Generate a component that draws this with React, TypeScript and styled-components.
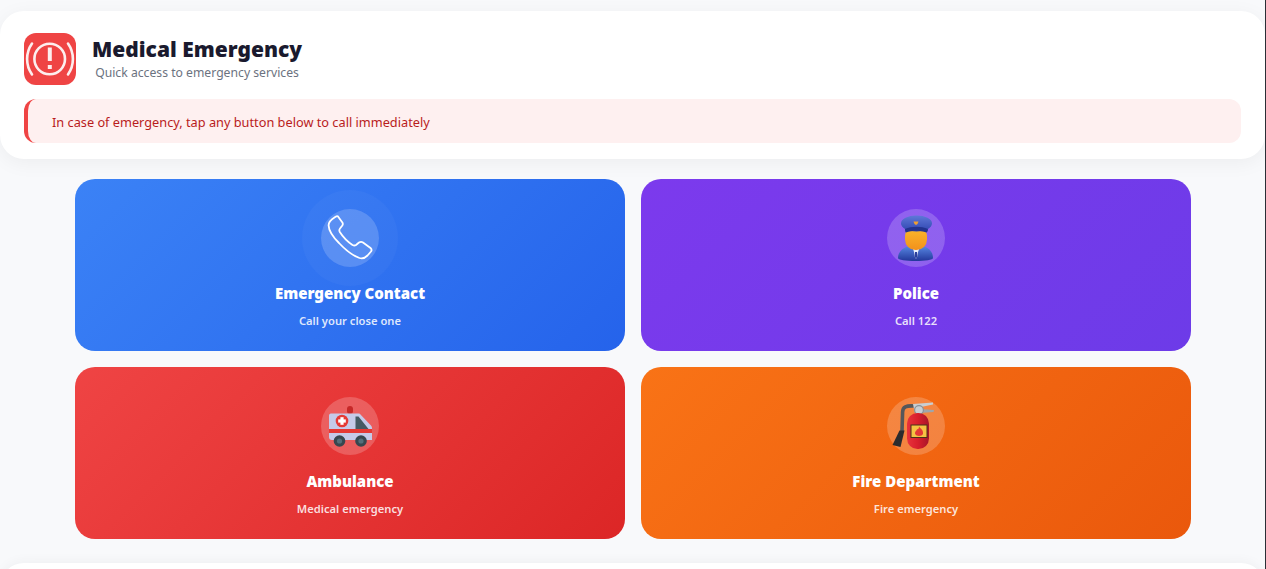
import React from "react";
import styled, { createGlobalStyle } from "styled-components";

const Global = createGlobalStyle`
  html, body { margin: 0; padding: 0; background: #f8f9fb; overflow: hidden; }
  body { font-family: "Noto Sans", "Open Sans", sans-serif; }
`;

const Page = styled.div`
  height: 569px;
  overflow: hidden;
  background: #f8f9fb;
  padding-top: 11px;
  box-sizing: border-box;
  border-right: 1px solid #2b2f36;
`;

const Header = styled.header`
  box-sizing: border-box;
  height: 148px;
  padding: 22px 24px 16px;
  background: #fff;
  border-radius: 24px;
  box-shadow: 0 4px 20px rgba(0, 0, 0, 0.05);
`;

const TitleRow = styled.div`
  display: flex;
  align-items: flex-start;
  gap: 16px;
  height: 52px;
  margin-bottom: 14px;
`;

const Logo = styled.div`
  width: 52px;
  height: 52px;
  border-radius: 12px;
  background: #ef4444;
  display: flex;
  align-items: center;
  justify-content: center;
  flex: none;
`;

const TitleBlock = styled.div`
  text-align: center;
  padding-top: 1px;
`;

const Title = styled.h1`
  margin: 0;
  font-size: 21px;
  line-height: 30px;
  font-weight: 900;
  color: #1a1a2e;
`;

const Subtitle = styled.p`
  margin: 1px 0 0;
  font-size: 12.2px;
  line-height: 16px;
  color: #6b7280;
`;

const Alert = styled.div`
  height: 44px;
  width: 1217px;
  box-sizing: border-box;
  padding: 2px 24px 0;
  display: flex;
  align-items: center;
  border-left: 4px solid #ef4444;
  border-radius: 12px;
  background: #fef0f0;
  color: #b91c1c;
  font-size: 12.75px;
`;

const Grid = styled.main`
  display: grid;
  grid-template-columns: 550px 550px;
  grid-auto-rows: 172px;
  gap: 16px;
  padding: 20px 0 0 75px;
`;

const Card = styled.button<{ $from: string; $to: string }>`
  border: 0;
  padding: 30px 0 0;
  margin: 0;
  font-family: inherit;
  border-radius: 20px;
  color: #fff;
  background: linear-gradient(135deg, ${(p) => p.$from}, ${(p) => p.$to});
  display: flex;
  flex-direction: column;
  align-items: center;
`;

const Circle = styled.div<{ $halo?: boolean }>`
  width: 58px;
  height: 58px;
  border-radius: 50%;
  background: rgba(255, 255, 255, 0.2);
  display: flex;
  align-items: center;
  justify-content: center;
  flex: none;
  box-shadow: ${(p) => (p.$halo ? "0 0 0 19px rgba(255,255,255,0.03)" : "none")};
`;

const CardTitle = styled.div`
  margin-top: 15px;
  font-size: 15px;
  line-height: 22px;
  font-weight: 900;
  color: #fff;
`;

const CardSub = styled.div`
  margin-top: 9px;
  font-size: 11.2px;
  line-height: 16px;
  font-weight: 600;
  color: rgba(255, 255, 255, 0.85);
`;

const Footer = styled.section`
  margin-top: 24px;
  height: 100px;
  background: #fff;
  border-radius: 24px 24px 0 0;
  box-shadow: 0 -2px 12px rgba(0, 0, 0, 0.04);
`;

const AlertIcon = () => (
  <svg width="52" height="52" viewBox="0 0 52 52" fill="none" stroke="#fdeeee">
    <circle cx="25.7" cy="26" r="15.3" strokeWidth="2.6" />
    <path d="M8 10.5 A27 27 0 0 0 8 41.5" strokeWidth="2.6" strokeLinecap="round" />
    <path d="M44 10.5 A27 27 0 0 1 44 41.5" strokeWidth="2.6" strokeLinecap="round" />
    <rect x="23.8" y="14.5" width="4" height="13.5" fill="#fdeeee" stroke="none" />
    <rect x="23.8" y="32" width="4" height="4" fill="#fdeeee" stroke="none" />
  </svg>
);

const PhoneIcon = () => (
  <svg width="58" height="58" viewBox="0 0 58 58" fill="none">
    <path
      d="M14.5 9.5 C12 11 8.5 14 8.6 17.5 C8.8 22 13 29 19 35 C26 42.5 34 48 39.5 50 C42.5 51 45.5 49.5 47.5 47.5 L51 43.5 C52 42 51.7 41 50.5 40 L43 34.5 C41.5 33.4 40.5 33.5 39 34.5 L36 37 C34.8 37.8 33.5 37.5 32.5 37 C28 34 23 29 19.8 24 C19 22.5 19.2 21.5 20 20.5 L22.3 17.5 C23 16.5 23 15.5 22.4 14.5 L18 8.5 C17 7.5 15.8 8.7 14.5 9.5 Z"
      transform="translate(-1 -1)"
      stroke="#fff"
      strokeWidth="1.8"
      strokeLinejoin="round"
    />
  </svg>
);

const PoliceIcon = () => (
  <svg width="58" height="58" viewBox="0 0 58 58">
    <defs>
      <linearGradient id="pCap" x1="0" y1="0" x2="0" y2="1">
        <stop offset="0" stopColor="#5f78d8" />
        <stop offset="1" stopColor="#2f46b0" />
      </linearGradient>
      <linearGradient id="pBody" x1="0" y1="0" x2="0" y2="1">
        <stop offset="0" stopColor="#5b8de8" />
        <stop offset="1" stopColor="#23379a" />
      </linearGradient>
      <linearGradient id="pFace" x1="0" y1="0" x2="0" y2="1">
        <stop offset="0" stopColor="#fdbd2e" />
        <stop offset="1" stopColor="#f2911c" />
      </linearGradient>
    </defs>
    <path d="M11 49 C11 41 19 36 29 36 C39 36 46 41 46 49 C46 51 38 52 28.5 52 C19 52 11 51 11 49 Z" fill="url(#pBody)" />
    <path d="M25.5 38 L33 38 L31 43 L30.5 47 L29 50 L27.5 47 L27 43 Z" fill="#e8eefc" />
    <path d="M28 43 L30 43 L30.5 47 L29 50 L27.5 47 Z" fill="#2b3f9e" />
    <rect x="18" y="16" width="22" height="25" rx="10.5" fill="url(#pFace)" />
    <ellipse cx="29.5" cy="14.5" rx="15.5" ry="8" fill="url(#pCap)" />
    <path d="M18 20 C25 17 34 17 41 20 C41 22 40 23.5 39.5 23.5 C33 21 25 21 19 23.5 C18.5 23.5 18 22 18 20 Z" fill="#22338e" />
    <path d="M26.5 12.5 L31.5 12.5 L30.5 15 L29 16 L27.5 15 Z" fill="#f0a030" />
  </svg>
);

const AmbulanceIcon = () => (
  <svg width="58" height="58" viewBox="0 0 58 58">
    <rect x="26" y="9" width="6" height="8" rx="3" fill="#c62828" />
    <path d="M10 16.5 C8.5 16.5 8 17.5 8 19 L8 40 C8 42 9 43 11 43 L51 43 L51 31 C51 29.5 50 28.5 49 27.5 L39 17 C38.5 16.5 38 16.5 37 16.5 Z" fill="#c5cae9" />
    <path d="M34.5 19.5 L37.5 19.5 L47.5 32 L34.5 32 Z" fill="#455a64" />
    <rect x="8" y="32" width="43" height="4" fill="#e53935" />
    <circle cx="21" cy="24" r="6.3" fill="#e53935" />
    <rect x="19.4" y="20.2" width="3.2" height="7.6" fill="#fff" />
    <rect x="17.2" y="22.4" width="7.6" height="3.2" fill="#fff" />
    <circle cx="18.5" cy="44" r="5.8" fill="#37474f" />
    <circle cx="18.5" cy="44" r="2.6" fill="#546e7a" />
    <circle cx="40" cy="44" r="5.8" fill="#37474f" />
    <circle cx="40" cy="44" r="2.6" fill="#546e7a" />
  </svg>
);

const FireIcon = () => (
  <svg width="58" height="58" viewBox="0 0 58 58">
    <defs>
      <linearGradient id="fBody" x1="0" y1="0" x2="1" y2="0">
        <stop offset="0" stopColor="#e8323c" />
        <stop offset="0.5" stopColor="#d81e2c" />
        <stop offset="1" stopColor="#a8162a" />
      </linearGradient>
    </defs>
    <path d="M27 9 C19 8.5 15.8 10 15.6 15 L15 34" fill="none" stroke="#55575a" strokeWidth="3.6" />
    <path d="M12.5 33.5 L17.5 33.5 L13.5 50 L5.5 48 Z" fill="#2b2b2d" />
    <path d="M26 7 L46 5.5 L46 7.5 L34 10 L27 12 Z" fill="#c9ced2" />
    <path d="M33 12 L47 13 L46.5 15 L33 16 Z" fill="#9fa6ab" />
    <circle cx="32" cy="13" r="4.4" fill="#c9ced2" stroke="#8a9298" strokeWidth="1.2" />
    <rect x="20" y="16" width="22" height="36" rx="10.5" fill="url(#fBody)" />
    <rect x="24" y="28" width="16" height="12.5" fill="#f6c243" stroke="#4a3218" strokeWidth="1" />
    <path d="M32 29.5 C34 32 36.5 33 36 37 C35 39.5 29 39.5 28.2 37 C27.4 34.5 29.8 34 30 32 C31 33 32 31.5 32 29.5 Z" fill="#e53935" />
  </svg>
);

const cards = [
  { title: "Emergency Contact", sub: "Call your close one", from: "#3b82f6", to: "#2563eb", icon: <PhoneIcon />, halo: true },
  { title: "Police", sub: "Call 122", from: "#7c3aed", to: "#6d3be8", icon: <PoliceIcon /> },
  { title: "Ambulance", sub: "Medical emergency", from: "#ef4444", to: "#dc2626", icon: <AmbulanceIcon /> },
  { title: "Fire Department", sub: "Fire emergency", from: "#f97316", to: "#ea580c", icon: <FireIcon /> },
];

export default function App() {
  return (
    <Page>
      <Global />
      <Header>
        <TitleRow>
          <Logo>
            <AlertIcon />
          </Logo>
          <TitleBlock>
            <Title>Medical Emergency</Title>
            <Subtitle>Quick access to emergency services</Subtitle>
          </TitleBlock>
        </TitleRow>
        <Alert>In case of emergency, tap any button below to call immediately</Alert>
      </Header>
      <Grid>
        {cards.map((c) => (
          <Card key={c.title} $from={c.from} $to={c.to}>
            <Circle $halo={c.halo}>{c.icon}</Circle>
            <CardTitle>{c.title}</CardTitle>
            <CardSub>{c.sub}</CardSub>
          </Card>
        ))}
      </Grid>
      <Footer />
    </Page>
  );
}
